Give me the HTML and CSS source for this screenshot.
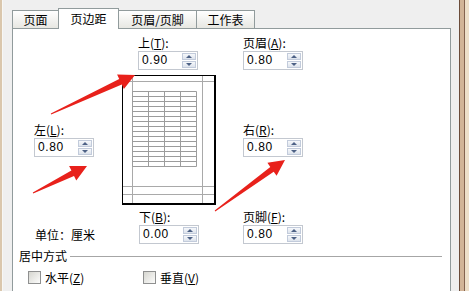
FILE: index.html
```html
<!DOCTYPE html>
<html lang="zh-CN">
<head>
	<meta charset="UTF-8">
	<title>页面设置</title>
	<link rel="stylesheet" href="styles.css">
</head>
<body>
	<div class="screen">
		<div class="edge-left"></div>
		<div class="dialog">
			<ul class="tabs">
				<li class="tab t1">页面</li>
				<li class="tab t2 active">页边距</li>
				<li class="tab t3">页眉/页脚</li>
				<li class="tab t4">工作表</li>
			</ul>
			<div class="page">
				<div class="margins">
					<div class="field f-top">
						<label>上(<u>T</u>):</label>
						<div class="spin"><span class="val">0.90</span><span class="btns"><i class="up"></i><i class="down"></i></span></div>
					</div>
					<div class="field f-header">
						<label>页眉(<u>A</u>):</label>
						<div class="spin"><span class="val">0.80</span><span class="btns"><i class="up"></i><i class="down"></i></span></div>
					</div>
					<div class="field f-left">
						<label>左(<u>L</u>):</label>
						<div class="spin"><span class="val">0.80</span><span class="btns"><i class="up"></i><i class="down"></i></span></div>
					</div>
					<div class="preview">
						<svg width="94" height="130" viewBox="0 0 94 130">
							<path d="M10.5 1V128M80.5 1V128M1 6.5H92M1 111.5H92M1 119.5H92" stroke="#a9a9a9" stroke-width="1" fill="none"/>
							<path d="M10.5 16.5V91.5M26.5 16.5V91.5M42.5 16.5V91.5M58.5 16.5V91.5M74.5 16.5V91.5
								M10.5 16.5H74.5M10.5 21.5H74.5M10.5 26.5H74.5M10.5 31.5H74.5M10.5 36.5H74.5M10.5 41.5H74.5
								M10.5 46.5H74.5M10.5 51.5H74.5M10.5 56.5H74.5M10.5 61.5H74.5M10.5 66.5H74.5M10.5 71.5H74.5
								M10.5 76.5H74.5M10.5 81.5H74.5M10.5 86.5H74.5M10.5 91.5H74.5" stroke="#9c9c9c" stroke-width="1" fill="none"/>
							<path d="M0.5 0V130M0 0.5H94" stroke="#000" stroke-width="1"/>
							<rect x="92" y="0" width="2" height="130" fill="#000"/>
							<rect x="0" y="128" width="94" height="2" fill="#000"/>
						</svg>
					</div>
					<div class="field f-right">
						<label>右(<u>R</u>):</label>
						<div class="spin"><span class="val">0.80</span><span class="btns"><i class="up"></i><i class="down"></i></span></div>
					</div>
					<div class="unit">单位：厘米</div>
					<div class="field f-bottom">
						<label>下(<u>B</u>):</label>
						<div class="spin"><span class="val">0.00</span><span class="btns"><i class="up"></i><i class="down"></i></span></div>
					</div>
					<div class="field f-footer">
						<label>页脚(<u>F</u>):</label>
						<div class="spin"><span class="val">0.80</span><span class="btns"><i class="up"></i><i class="down"></i></span></div>
					</div>
				</div>
				<div class="group">
					<div class="group-title"><span>居中方式</span><i></i></div>
					<div class="checks">
						<label class="check c1"><span class="box"></span>水平(<u>Z</u>)</label>
						<label class="check"><span class="box"></span>垂直(<u>V</u>)</label>
					</div>
				</div>
			</div>
		</div>
		<div class="edge-right"></div>

		<!-- red arrows drawn over the dialog -->
		<svg class="arrows" width="469" height="291" viewBox="0 0 469 291">
			<polygon fill="#e8211b" points="51.2,114.5 121.8,84.4 123.9,89 135,75 117.1,74.4 119.2,79 50.8,113.5"/>
			<polygon fill="#e8211b" points="33.2,193.4 74,175.9 76.3,180.4 87,166 69.1,166 71.4,170.5 32.8,192.6"/>
			<polygon fill="#e8211b" points="215.3,211.4 273.7,171.7 276.6,175.8 285,160 267.4,162.8 270.3,166.9 214.7,210.6"/>
		</svg>
	</div>
</body>
</html>
```

FILE: styles.css
```css
body, ul {
	padding: 0;
	margin: 0;
}
body {
	width: 469px;
	height: 291px;
	overflow: hidden;
	font-family: "Noto Sans CJK SC", sans-serif;
	font-size: 12px;
	color: #000;
	background: #eadbc6;
}
u {
	text-decoration: underline;
}
.screen {
	position: relative;
	display: flex;
	height: 291px;
	overflow: hidden;
}
.edge-left {
	width: 3px;
	background: linear-gradient(to right, #dac7ad 0 2px, #f7f7f5 2px 3px);
}
.edge-right {
	width: 10px;
	background: linear-gradient(to right, #6b4c3a 0 1px, #d2b497 1px 5px, #84634f 5px 6px, #eedfc9 6px);
}
.dialog {
	width: 456px;
	box-sizing: border-box;
	padding: 8px 8px 0 9px;
	background: #efefef;
}
.tabs {
	display: flex;
	align-items: flex-end;
	height: 20px;
	list-style: none;
}
.tab {
	height: 18px;
	box-sizing: border-box;
	margin-right: -1px;
	border: 1px solid #919b9c;
	border-bottom: none;
	background: linear-gradient(#fff, #e7e7e2);
	text-align: center;
	line-height: 17px;
}
.tab.active {
	position: relative;
	z-index: 1;
	height: 21px;
	margin-bottom: -1px;
	background: #fff;
	line-height: 19px;
}
.t1 { width: 47px; }
.t2 { width: 61px; }
.t3 { width: 79px; }
.t4 { width: 59px; }
.page {
	height: 263px;
	box-sizing: border-box;
	padding: 7px 8px 0 6px;
	border: 1px solid #919b9c;
	border-bottom: none;
	background: #fff;
}
.margins {
	display: grid;
	margin-left: 15px;
	grid-template-columns: 86px 123px 1fr;
	grid-template-rows: auto 130px auto;
	grid-template-areas:
		". top header"
		"left preview right"
		"unit bottom footer";
	row-gap: 5px;
}
.field label {
	display: block;
	height: 14px;
	line-height: 14px;
	margin-bottom: 1px;
}
.f-top { grid-area: top; margin-left: 18px; }
.f-header { grid-area: header; }
.f-left { grid-area: left; align-self: center; margin-top: -1px; }
.f-right { grid-area: right; align-self: center; margin-top: -1px; }
.f-bottom { grid-area: bottom; margin-left: 19px; }
.f-footer { grid-area: footer; }
.preview {
	grid-area: preview;
	margin-left: 2px;
	width: 94px;
	height: 130px;
}
.preview svg {
	display: block;
}
.unit {
	grid-area: unit;
	align-self: end;
	margin-left: 1px;
	line-height: 19px;
}
.spin {
	display: flex;
	width: 60px;
	height: 19px;
	box-sizing: border-box;
	border: 1px solid #c3c8d0;
	background: #fff;
}
.val {
	flex: 1;
	padding-left: 3px;
	font-family: "Liberation Sans", sans-serif;
	font-size: 12px;
	letter-spacing: 0.6px;
	line-height: 17px;
}
.btns {
	display: flex;
	flex-direction: column;
	gap: 1px;
	width: 14px;
	margin: 1px;
}
.btns i {
	position: relative;
	display: block;
	height: 7px;
	box-sizing: border-box;
	border: 1px solid #c2cbdb;
	background: linear-gradient(#f6f8fb, #dde3ec);
}
.btns i:after {
	content: '';
	position: absolute;
	left: 3px;
	border-left: 3px solid transparent;
	border-right: 3px solid transparent;
}
.btns .up:after {
	top: 1px;
	border-bottom: 3px solid #4d6185;
}
.btns .down:after {
	top: 1px;
	border-top: 3px solid #4d6185;
}
.group {
	margin-top: 5px;
}
.group-title {
	display: flex;
	align-items: center;
	height: 14px;
	line-height: 14px;
}
.group-title i {
	flex: 1;
	margin-left: 3px;
	border-top: 1px solid #a6a6a6;
}
.checks {
	display: flex;
	margin-top: 8px;
	padding-left: 9px;
}
.check {
	display: flex;
	align-items: center;
	height: 13px;
	line-height: 13px;
}
.check.c1 {
	width: 115px;
}
.box {
	width: 13px;
	height: 13px;
	box-sizing: border-box;
	margin-right: 4px;
	border: 1px solid #8f9090;
	background: linear-gradient(135deg, #d6d6d0, #fcfcfb);
}
.arrows {
	position: absolute;
	left: 0;
	top: 0;
	pointer-events: none;
}
```
